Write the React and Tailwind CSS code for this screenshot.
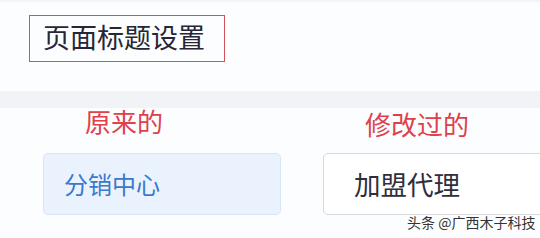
import React from "react"

const font = { fontFamily: '"Noto Sans CJK SC", "Noto Sans", sans-serif' }

const App = () => {
	return (
		<div className="relative w-[540px] h-[238px] overflow-hidden bg-[#fcfdfe]" style={font}>
			<div className="h-[91px] pt-[13px] pl-[29px] border-t-[2px] border-[#f3f4f6]">
				<div className="w-[196px] h-[47px] border border-[#d4505a] flex items-center pl-[13px] pb-[4px] text-[27px] leading-none text-[#262636]">
					页面标题设置
				</div>
			</div>
			<div className="h-[17px] bg-[#f1f3f6]" />
			<div className="flex h-[45px] items-start text-[#e0404a] leading-none">
				<div className="ml-[85px] text-[26px]">原来的</div>
				<div className="ml-[202px] mt-[3px] text-[26px]">修改过的</div>
			</div>
			<div className="flex h-[62px]">
				<div className="ml-[43px] w-[238px] shrink-0 rounded-[5px] border border-[#d6e6f8] bg-[#eaf3fd] flex items-center pl-[20px] text-[24px] leading-none text-[#3b78cc]">
					分销中心
				</div>
				<div className="ml-[42px] w-[240px] shrink-0 rounded-[5px] border border-[#d8dade] bg-white flex items-center pl-[30px] text-[26.5px] leading-none text-[#2e2e3c]">
					加盟代理
				</div>
			</div>
			<div className="absolute top-[215px] left-[407px] text-[14px] leading-none text-[#333333] whitespace-nowrap [text-shadow:0_0_2px_#ffffff]">
				头条 @广西木子科技
			</div>
		</div>
	)
}

export default App
